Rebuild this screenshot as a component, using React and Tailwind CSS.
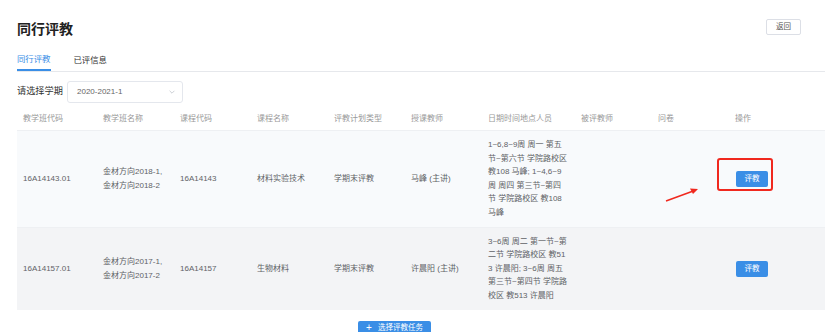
import React from 'react'

const font = { fontFamily: '"Liberation Sans", "Noto Sans CJK SC", sans-serif' }

const columns = ['教学班代码', '教学班名称', '课程代码', '课程名称', '评教计划类型', '授课教师', '日期时间地点人员', '被评教师', '问卷', '操作']

const rows = [
    {
        code: '16A14143.01',
        names: ['金材方向2018-1,', '金材方向2018-2'],
        course: '16A14143',
        courseName: '材料实验技术',
        type: '学期末评教',
        teacher: '马峰 (主讲)',
        when: ['1~6,8~9周 周一 第五', '节~第六节 学院路校区', '教108 马峰; 1~4,6~9', '周 周四 第三节~第四', '节 学院路校区 教108', '马峰'],
        bg: 'bg-[#f8fafc]',
    },
    {
        code: '16A14157.01',
        names: ['金材方向2017-1,', '金材方向2017-2'],
        course: '16A14157',
        courseName: '生物材料',
        type: '学期末评教',
        teacher: '许晨阳 (主讲)',
        when: ['3~6周 周二 第一节~第', '二节 学院路校区 教51', '3 许晨阳; 3~6周 周五', '第三节~第四节 学院路', '校区 教513 许晨阳'],
        bg: 'bg-[#f3f4f6]',
    },
]

const grid = 'grid grid-cols-[80px_77px_77px_77px_77px_77px_93px_77px_77px_96px]'

const App = () => {
    return (
        <div style={font} className="w-[828px] h-[332px] overflow-hidden bg-white pl-[17px] pr-[3px]">
            {/* Title */}
            <div className="flex justify-between items-start pt-[19px]">
                <h1 className="text-[14px] leading-[20px] font-bold text-[#222]">同行评教</h1>
                <button className="mr-[24px] w-[35px] h-[16px] border border-[#dcdfe6] rounded-[2px] text-[7.5px] text-[#555] flex items-center justify-center">
                    返回
                </button>
            </div>

            {/* Tabs */}
            <div className="mt-[10px] flex gap-[23px] border-b border-[#e6e8ec]">
                <div className="h-[22px] flex items-center text-[8.4px] text-[#3a8ee6] border-b-2 border-[#3a8ee6] -mb-px">同行评教</div>
                <div className="h-[22px] flex items-center text-[8.4px] text-[#333]">已评信息</div>
            </div>

            {/* Semester */}
            <div className="mt-[9px] flex items-center gap-[4px]">
                <span className="text-[9.2px] text-[#333] w-[46px]">请选择学期</span>
                <div className="w-[116px] h-[22px] border border-[#e4e7ed] rounded-[3px] flex items-center justify-between pl-[9px] pr-[6px]">
                    <span className="text-[8px] text-[#666]">2020-2021-1</span>
                    <svg width="8" height="8" viewBox="0 0 10 10" fill="none" stroke="#c0c4cc" strokeWidth="1">
                        <path d="M2 3.5 L5 6.5 L8 3.5" />
                    </svg>
                </div>
            </div>

            {/* Table */}
            <div className="relative mt-[4px]">
                <div className={`${grid} h-[23px] items-center`}>
                    {columns.map((c) => (
                        <div key={c} className="pl-[6px] text-[8px] text-[#999]">{c}</div>
                    ))}
                </div>
                {rows.map((r) => (
                    <div key={r.code} className={`${grid} ${r.bg} items-center py-[7px] border-t border-[#eef0f3] text-[8px] leading-[13.6px] text-[#606266]`}>
                        <div className="pl-[6px]">{r.code}</div>
                        <div className="pl-[6px]">
                            {r.names.map((n) => <div key={n}>{n}</div>)}
                        </div>
                        <div className="pl-[6px]">{r.course}</div>
                        <div className="pl-[6px]">{r.courseName}</div>
                        <div className="pl-[6px]">{r.type}</div>
                        <div className="pl-[6px]">{r.teacher}</div>
                        <div className="pl-[6px] whitespace-nowrap">
                            {r.when.map((w) => <div key={w}>{w}</div>)}
                        </div>
                        <div />
                        <div />
                        <div className="pl-[7px]">
                            <button className="w-[32px] h-[16px] rounded-[2px] bg-[#3a8ee6] text-white text-[7.5px] flex items-center justify-center">评教</button>
                        </div>
                    </div>
                ))}

                {/* annotation */}
                <div className="absolute left-[700px] top-[51px] w-[56px] h-[33px] border-2 border-[#f0281e] rounded-[3px]" />
                <svg className="absolute left-[645px] top-[75px]" width="40" height="22" viewBox="0 0 40 22">
                    <line x1="4" y1="19" x2="34" y2="8" stroke="#f0281e" strokeWidth="1.5" />
                    <path d="M36 7 L28 6.5 L31 12 Z" fill="#f0281e" />
                </svg>
            </div>

            {/* Bottom action */}
            <div className="mt-[11px] pl-[341px]">
                <button className="w-[73px] h-[15px] rounded-[2px] bg-[#3a8ee6] text-white text-[7.5px] flex items-center justify-center gap-[6px]">
                    <span className="text-[10px] leading-none">+</span>
                    <span>选择评教任务</span>
                </button>
            </div>
        </div>
    )
}

export default App
